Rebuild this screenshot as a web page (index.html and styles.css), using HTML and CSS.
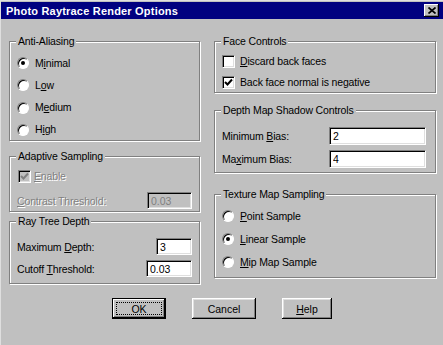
FILE: index.html
```html
<!DOCTYPE html>
<html lang="en">
<head>
    <meta charset="UTF-8">
    <title>Photo Raytrace Render Options</title>
    <link rel="stylesheet" href="styles.css">
</head>
<body>
    <div class="window">
        <div class="titlebar">
            <span class="title">Photo Raytrace Render Options</span>
            <span class="close-btn">
                <svg width="8" height="7" viewBox="0 0 8 7"><path d="M0.5 0.5 L7.5 6.5 M7.5 0.5 L0.5 6.5" stroke="#000" stroke-width="1.7" fill="none"/></svg>
            </span>
        </div>

        <div class="content">
            <div class="column left-col">
                <div class="group aa">
                    <div class="group-title">Anti-Aliasing</div>
                    <div class="options">
                        <div class="option"><span class="radio checked"></span>M<u>i</u>nimal</div>
                        <div class="option"><span class="radio"></span>L<u>o</u>w</div>
                        <div class="option"><span class="radio"></span>M<u>e</u>dium</div>
                        <div class="option"><span class="radio"></span>H<u>i</u>gh</div>
                    </div>
                </div>

                <div class="group adaptive">
                    <div class="group-title">Adaptive Sampling</div>
                    <div class="option disabled enable-row">
                        <span class="check disabled-box">
                            <svg width="9" height="9" viewBox="0 0 9 9"><path d="M1 4 L3.5 6.5 L8 1.5" stroke="#808080" stroke-width="2" fill="none"/></svg>
                        </span>
                        <span class="dim"><u>E</u>nable</span>
                    </div>
                    <div class="field contrast-row">
                        <span class="dim"><u>C</u>ontrast Threshold:</span>
                        <input class="edit edit-disabled w-contrast" type="text" value="0.03" readonly>
                    </div>
                </div>

                <div class="group raytree">
                    <div class="group-title">Ray Tree Depth</div>
                    <div class="field first-field">
                        <span>Maximum <u>D</u>epth:</span>
                        <input class="edit w-depth" type="text" value="3" readonly>
                    </div>
                    <div class="field next-field">
                        <span>Cutoff <u>T</u>hreshold:</span>
                        <input class="edit w-cutoff" type="text" value="0.03" readonly>
                    </div>
                </div>
            </div>

            <div class="column right-col">
                <div class="group face">
                    <div class="group-title">Face Controls</div>
                    <div class="option face-first"><span class="check"></span><u>D</u>iscard back faces</div>
                    <div class="option face-next">
                        <span class="check">
                            <svg width="9" height="9" viewBox="0 0 9 9"><path d="M1 4 L3.5 6.5 L8 1.5" stroke="#000" stroke-width="2" fill="none"/></svg>
                        </span>
                        Back face normal is negative
                    </div>
                </div>

                <div class="group depth">
                    <div class="group-title">Depth Map Shadow Controls</div>
                    <div class="field first-field">
                        <span>Minimum <u>B</u>ias:</span>
                        <input class="edit w-bias" type="text" value="2" readonly>
                    </div>
                    <div class="field next-field">
                        <span>Ma<u>x</u>imum Bias:</span>
                        <input class="edit w-bias" type="text" value="4" readonly>
                    </div>
                </div>

                <div class="group texture">
                    <div class="group-title">Texture Map Sampling</div>
                    <div class="options tex-options">
                        <div class="option"><span class="radio"></span><u>P</u>oint Sample</div>
                        <div class="option"><span class="radio checked"></span><u>L</u>inear Sample</div>
                        <div class="option"><span class="radio"></span><u>M</u>ip Map Sample</div>
                    </div>
                </div>
            </div>
        </div>

        <div class="buttons">
            <button class="btn btn-default w-ok"><span class="focus">OK</span></button>
            <button class="btn w-cancel">Cancel</button>
            <button class="btn w-help"><u>H</u>elp</button>
        </div>
    </div>
</body>
</html>
```

FILE: styles.css
```css
* {
    box-sizing: border-box;
}

body {
    margin: 0;
    background-color: #c0c0c0;
    font-family: "Liberation Sans", Arial, sans-serif;
    font-size: 10.5px;
    letter-spacing: -0.15px;
    color: #000;
}

.window {
    width: 443px;
    height: 345px;
    padding-top: 1px;
    border-top: 1px solid #dfdfdf;
    border-left: 1px solid #dfdfdf;
    overflow: hidden;
}

/* title bar */
.titlebar {
    height: 17px;
    background-color: #000080;
    color: #fff;
    display: flex;
    align-items: center;
    justify-content: space-between;
    padding: 0 4px 0 5px;
}

.title {
    font-weight: bold;
    font-size: 11px;
    letter-spacing: 0.2px;
}

.close-btn {
    width: 15px;
    height: 13px;
    background-color: #c0c0c0;
    display: flex;
    align-items: center;
    justify-content: center;
    box-shadow: inset -1px -1px #000, inset 1px 1px #fff, inset -2px -2px #808080;
}

/* layout */
.content {
    display: flex;
    gap: 14px;
    padding: 22px 0 0 8px;
}

.column {
    display: flex;
    flex-direction: column;
}

.left-col {
    width: 191px;
}

.right-col {
    width: 222px;
}

.group {
    border: 1px solid #808080;
    box-shadow: inset 1px 1px #fff, 1px 1px #fff;
    padding: 0 7px;
}

.right-col .group {
    padding: 0 9px 0 7px;
}

.group-title {
    width: fit-content;
    margin: -7px 0 0 -1px;
    padding: 0 2px;
    line-height: 12px;
    background-color: #c0c0c0;
}

.aa {
    height: 100px;
}

.adaptive {
    height: 56px;
    margin-top: 15px;
}

.raytree {
    height: 63px;
    margin-top: 9px;
}

.face {
    height: 52px;
}

.depth {
    height: 63px;
    margin-top: 17px;
}

.texture {
    height: 84px;
    margin-top: 21px;
}

/* radios and checkboxes */
.options {
    display: flex;
    flex-direction: column;
    gap: 9.3px;
    padding-top: 9.5px;
}

.tex-options {
    gap: 10px;
}

.option {
    display: flex;
    align-items: center;
    height: 13px;
    line-height: 13px;
}

.radio {
    width: 12px;
    height: 12px;
    margin-right: 6px;
    border-radius: 50%;
    background-color: #fff;
    border: 1px solid;
    border-color: #808080 #fff #fff #808080;
    box-shadow: inset 1px 1px #000;
    display: flex;
    align-items: center;
    justify-content: center;
}

.radio.checked::after {
    content: "";
    width: 4px;
    height: 4px;
    border-radius: 50%;
    background-color: #000;
}

.check {
    width: 13px;
    height: 13px;
    margin-right: 3px;
    background-color: #fff;
    border: 1px solid;
    border-color: #808080 #fff #fff #808080;
    box-shadow: inset 1px 1px #000, inset -1px -1px #dfdfdf;
    display: flex;
    align-items: center;
    justify-content: center;
}

.right-col .check {
    margin-right: 5px;
}

.check.disabled-box {
    background-color: #c0c0c0;
}

.dim {
    color: #808080;
    text-shadow: 1px 1px #fff;
}

.enable-row {
    margin: 8px 0 0 1px;
}

.contrast-row {
    margin-top: 9px;
}

.face-first {
    margin-top: 7.5px;
}

.face-next {
    margin-top: 8px;
}

/* label + edit box rows */
.field {
    display: flex;
    align-items: center;
    justify-content: space-between;
}

.first-field {
    margin-top: 11px;
}

.next-field {
    margin-top: 5px;
}

.edit {
    height: 17px;
    padding: 0 3px;
    font: inherit;
    color: #000;
    background-color: #fff;
    border: 1px solid;
    border-color: #808080 #fff #fff #808080;
    box-shadow: inset 1px 1px #000, inset -1px -1px #dfdfdf;
    outline: none;
}

.edit-disabled {
    background-color: #c0c0c0;
    color: #808080;
}

.w-contrast {
    width: 45px;
}

.w-depth {
    width: 36px;
}

.w-cutoff {
    width: 46px;
}

.w-bias {
    width: 97px;
    height: 18px;
}

/* buttons */
.buttons {
    display: flex;
    gap: 26px;
    margin: 14px 0 0 111px;
}

.btn {
    height: 21px;
    padding: 0;
    border: none;
    font: inherit;
    color: #000;
    background-color: #c0c0c0;
    box-shadow: inset -1px -1px #000, inset 1px 1px #fff, inset -2px -2px #808080, inset 2px 2px #dfdfdf;
}

.btn-default {
    display: flex;
    padding: 4px;
    box-shadow: inset 0 0 0 1px #000, inset -2px -2px #000, inset 2px 2px #fff, inset -3px -3px #808080;
}

.focus {
    flex: 1;
    display: flex;
    align-items: center;
    justify-content: center;
    border: 1px dotted #000;
}

.w-ok {
    width: 54px;
}

.w-cancel {
    width: 64px;
}

.w-help {
    width: 50px;
}
```
